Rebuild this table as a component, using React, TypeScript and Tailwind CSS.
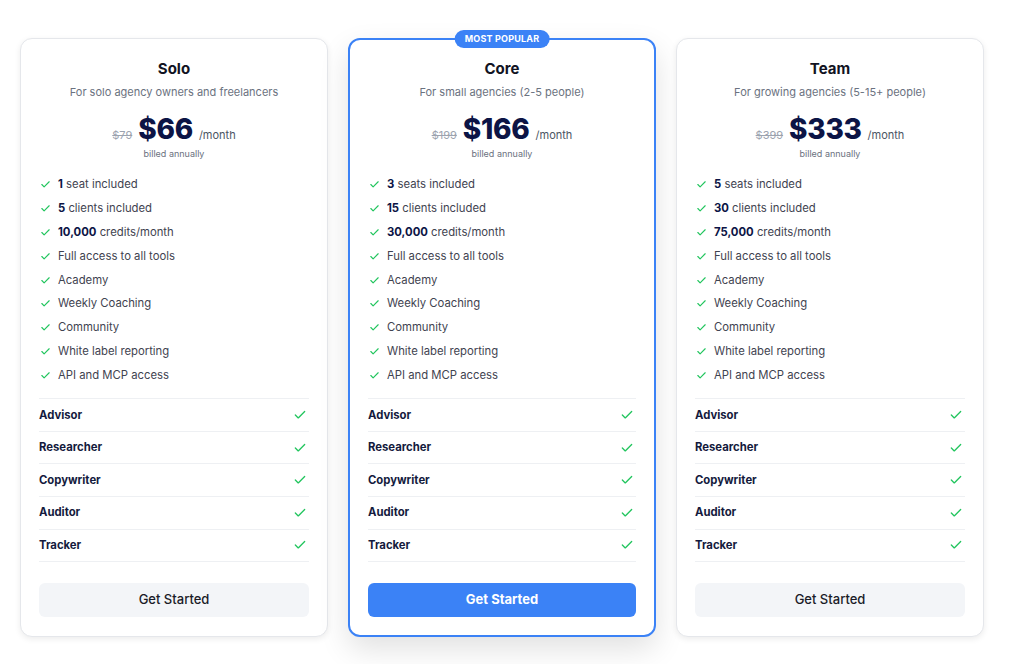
import { Check } from "lucide-react";

type Plan = {
  name: string;
  desc: string;
  old: string;
  price: string;
  seats: string;
  seatLabel: string;
  clients: string;
  credits: string;
  popular?: boolean;
};

const plans: Plan[] = [
  { name: "Solo", desc: "For solo agency owners and freelancers", old: "$79", price: "$66", seats: "1", seatLabel: "seat included", clients: "5", credits: "10,000" },
  { name: "Core", desc: "For small agencies (2-5 people)", old: "$199", price: "$166", seats: "3", seatLabel: "seats included", clients: "15", credits: "30,000", popular: true },
  { name: "Team", desc: "For growing agencies (5-15+ people)", old: "$399", price: "$333", seats: "5", seatLabel: "seats included", clients: "30", credits: "75,000" },
];

const extras = ["Full access to all tools", "Academy", "Weekly Coaching", "Community", "White label reporting", "API and MCP access"];
const tools = ["Advisor", "Researcher", "Copywriter", "Auditor", "Tracker"];

function Feature({ children }: { children: React.ReactNode }) {
  return (
    <li className="flex items-center h-[23.8px] text-[11.3px] text-[#3f4350]">
      <Check className="text-[#22c55e] w-[11px] h-[11px] ml-[1px] mr-[7px]" strokeWidth={2.5} />
      <span>{children}</span>
    </li>
  );
}

function Card({ plan }: { plan: Plan }) {
  const cardClass = plan.popular
    ? "relative bg-white border-2 border-[#3b82f6] rounded-xl w-[308px] px-[18px] pt-[19px] pb-[18px] shadow-[0_12px_30px_rgba(0,0,0,0.12)]"
    : "relative bg-white border border-[#e5e7eb] rounded-xl w-[308px] px-[18px] pt-[20px] pb-[19px] shadow-[0_2px_6px_rgba(0,0,0,0.08)]";
  return (
    <div className={cardClass}>
      {plan.popular && (
        <div className="absolute -top-[10px] left-1/2 -translate-x-1/2 bg-[#3b82f6] text-white text-[9px] font-bold tracking-[0.2px] rounded-full px-[10px] h-[18px] flex items-center">
          MOST POPULAR
        </div>
      )}
      <div className="text-center">
        <div className="text-[15px] leading-[20px] font-bold text-[#111322]">{plan.name}</div>
        <div className="mt-[5px] text-[11px] leading-[16px] text-[#6b7280]">{plan.desc}</div>
        <div className="mt-[13px] flex items-baseline justify-center h-[32px]">
          <span className="text-[11px] text-[#9ca3af] line-through mr-[6px]">{plan.old}</span>
          <span className="text-[28px] leading-[32px] font-extrabold text-[#0c1445] tracking-[-0.3px]">{plan.price}</span>
          <span className="text-[11px] text-[#4b5563] ml-[6px]">/month</span>
        </div>
        <div className="mt-[3px] text-[9px] leading-[12px] text-[#6b7280]">billed annually</div>
      </div>
      <ul className="mt-[13px]">
        <Feature>
          <b className="font-bold text-[#0c1445]">{plan.seats}</b> {plan.seatLabel}
        </Feature>
        <Feature>
          <b className="font-bold text-[#0c1445]">{plan.clients}</b> clients included
        </Feature>
        <Feature>
          <b className="font-bold text-[#0c1445]">{plan.credits}</b> credits/month
        </Feature>
        {extras.map((e) => (
          <Feature key={e}>{e}</Feature>
        ))}
      </ul>
      <div className="mt-[11px] border-t border-[#eef0f3]">
        {tools.map((t) => (
          <div key={t} className="flex items-center justify-between h-[32.6px] border-b border-[#eef0f3]">
            <span className="text-[11.3px] font-bold text-[#141a3d]">{t}</span>
            <Check className="text-[#22c55e] w-[14px] h-[14px] mr-[2px]" strokeWidth={2.25} />
          </div>
        ))}
      </div>
      <button
        className={
          plan.popular
            ? "mt-[21px] w-full h-[34px] rounded-md bg-[#3b82f6] text-white text-[13px] font-bold"
            : "mt-[21px] w-full h-[34px] rounded-md bg-[#f3f5f8] text-[#1a1c28] text-[13px] font-medium"
        }
      >
        Get Started
      </button>
    </div>
  );
}

export default function App() {
  return (
    <div className="min-h-screen bg-white font-['Inter',sans-serif] pt-[38px] pl-[20px]">
      <div className="flex gap-[20px] items-start">
        {plans.map((p) => (
          <Card key={p.name} plan={p} />
        ))}
      </div>
    </div>
  );
}
